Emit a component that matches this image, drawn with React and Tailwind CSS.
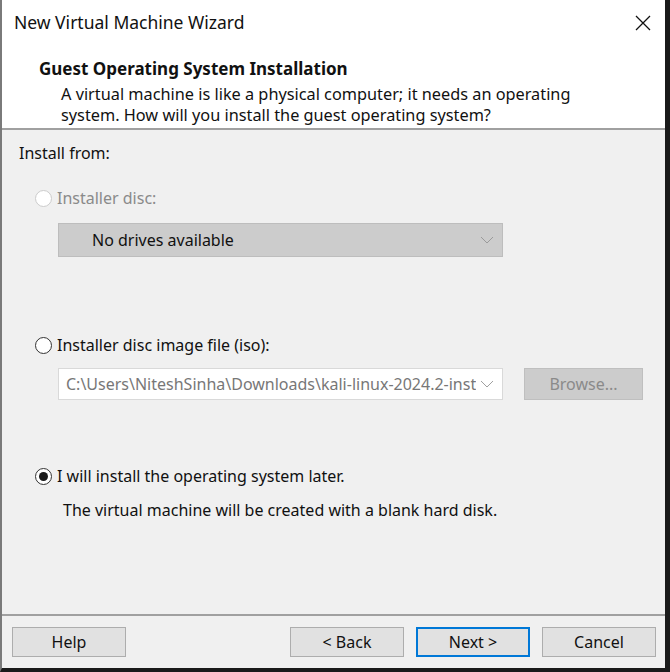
import React from "react";

function Radio({ checked, disabled }) {
  return (
    <span
      className={
        "flex h-[17px] w-[17px] shrink-0 items-center justify-center rounded-full border bg-white " +
        (disabled ? "border-[#cccccc]" : "border-[#333333]")
      }
    >
      {checked && <span className="h-[9px] w-[9px] rounded-full bg-[#1a1a1a]" />}
    </span>
  );
}

function Chevron({ color }) {
  return (
    <svg width="14" height="8" viewBox="0 0 14 8" fill="none">
      <path d="M1 1 L7 7 L13 1" stroke={color} strokeWidth="1" />
    </svg>
  );
}

function Btn({ children, primary }) {
  return (
    <div
      className={
        "flex h-[30px] w-[114px] items-center justify-center bg-[#e1e1e1] text-[16px] text-[#111] " +
        (primary ? "border-2 border-[#0078d7]" : "border border-[#adadad]")
      }
    >
      {children}
    </div>
  );
}

export default function App() {
  return (
    <div
      className="flex h-[672px] w-[670px] flex-col border-b-[4px] border-l-2 border-r-[5px] border-b-[#1a1a1a] border-l-[#7a7a7a] border-r-[#1a1a1a] bg-[#f0f0f0]"
      style={{ fontFamily: '"Segoe UI", "Noto Sans", "Liberation Sans", sans-serif' }}
    >
      <div className="flex h-[128px] shrink-0 flex-col bg-white">
        <div className="flex h-[45px] items-center justify-between pl-[12px] pr-[14px]">
          <span className="text-[17.5px] text-[#111]">New Virtual Machine Wizard</span>
          <svg width="16" height="16" viewBox="0 0 16 16">
            <path d="M1 1 L15 15 M15 1 L1 15" stroke="#111" strokeWidth="1.3" />
          </svg>
        </div>
        <div className="pl-[37px] pt-[13px] text-[17px] font-bold leading-[22px] text-[#111]">
          Guest Operating System Installation
        </div>
        <div className="mt-[4px] pl-[59px] text-[16.3px] leading-[21px] text-[#111]">
          A virtual machine is like a physical computer; it needs an operating
          <br />
          system. How will you install the guest operating system?
        </div>
      </div>
      <div className="h-[2px] shrink-0 bg-[#a0a0a0]" />
      <div className="flex flex-1 flex-col pl-[17px] text-[16px] text-[#111]">
        <div className="mt-[12px] h-[22px] leading-[22px]">Install from:</div>
        <div className="mt-[23px] flex h-[22px] items-center gap-[5px] pl-[16px] text-[#8a8a8a]">
          <Radio disabled />
          <span>Installer disc:</span>
        </div>
        <div className="ml-[39px] mt-[14px] flex h-[34px] w-[445px] items-center justify-between border border-[#bdbdbd] bg-[#cccccc] pl-[33px] pr-[8px]">
          <span className="text-[#111]">No drives available</span>
          <Chevron color="#9a9a9a" />
        </div>
        <div className="mt-[77px] flex h-[22px] items-center gap-[5px] pl-[16px]">
          <Radio />
          <span>Installer disc image file (iso):</span>
        </div>
        <div className="mt-[12px] flex items-center gap-[21px] pl-[39px]">
          <div className="flex h-[32px] w-[445px] items-center justify-between border border-[#d9d9d9] bg-white pl-[7px] pr-[8px]">
            <span className="w-[410px] overflow-hidden whitespace-nowrap text-[16px] text-[#777]">
              C:\Users\NiteshSinha\Downloads\kali-linux-2024.2-inst
            </span>
            <Chevron color="#a0a0a0" />
          </div>
          <div className="flex h-[32px] w-[119px] items-center justify-center border border-[#bfbfbf] bg-[#cccccc] text-[#8a8a8a]">
            Browse...
          </div>
        </div>
        <div className="mt-[65px] flex h-[22px] items-center gap-[5px] pl-[16px]">
          <Radio checked />
          <span>I will install the operating system later.</span>
        </div>
        <div className="mt-[12px] pl-[44px] leading-[22px]">
          The virtual machine will be created with a blank hard disk.
        </div>
      </div>
      <div className="h-[2px] shrink-0 bg-[#a0a0a0]" />
      <div className="flex h-[52px] shrink-0 items-center pl-[10px] pr-[9px]">
        <Btn>Help</Btn>
        <div className="flex-1" />
        <div className="flex gap-[12px]">
          <Btn>&lt; Back</Btn>
          <Btn primary>Next &gt;</Btn>
          <Btn>Cancel</Btn>
        </div>
      </div>
    </div>
  );
}
